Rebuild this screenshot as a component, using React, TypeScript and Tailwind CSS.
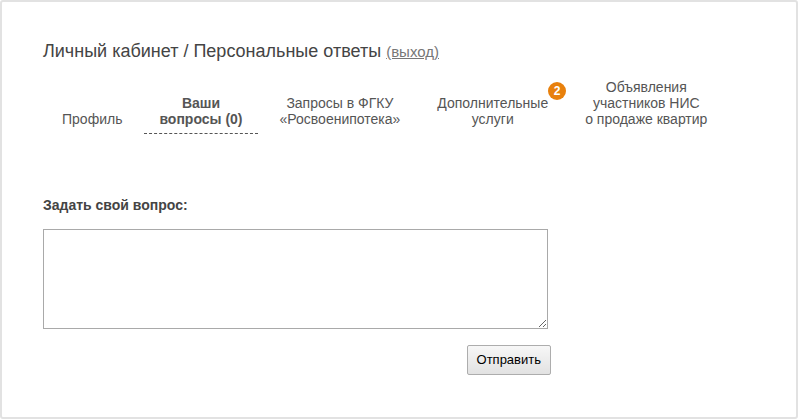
export default function App() {
  const tabs = [
    { label: ['Профиль'], active: false },
    { label: ['Ваши', 'вопросы (0)'], active: true },
    { label: ['Запросы в ФГКУ', '«Росвоенипотека»'], active: false },
    { label: ['Дополнительные', 'услуги'], active: false, badge: 2 },
    { label: ['Объявления', 'участников НИС', 'о продаже квартир'], active: false },
  ];

  return (
    <div
      className="w-[798px] h-[419px] border-2 border-[#e2e2e2] rounded-[3px] bg-white pl-[41px] pt-[38px]"
      style={{ fontFamily: '"Liberation Sans", Arial, sans-serif' }}
    >
      <h1 className="text-[18px] leading-[22px] text-[#444]">
        Личный кабинет / Персональные ответы{' '}
        <a href="#" className="text-[15px] text-[#777] underline">
          (выход)
        </a>
      </h1>

      <div className="flex items-end gap-[7px] mt-[16px] ml-[4px]">
        {tabs.map((t, i) => (
          <div
            key={i}
            className={
              'relative px-[15px] pb-[6px] border-b text-center text-[14px] leading-[16px] text-[#555] ' +
              (t.active ? 'font-bold border-dashed border-[#555]' : 'border-transparent')
            }
          >
            {t.label.map((l, j) => (
              <div key={j} className="whitespace-nowrap">
                {l}
              </div>
            ))}
            {t.badge && (
              <span className="absolute right-[-3px] top-[-13px] w-[18px] h-[18px] rounded-full bg-[#e8800c] text-white text-[12px] font-bold leading-[18px] text-center">
                {t.badge}
              </span>
            )}
          </div>
        ))}
      </div>

      <div className="mt-[63px] w-[508px]">
        <div className="text-[14px] leading-[16px] font-bold text-[#444]">Задать свой вопрос:</div>
        <textarea className="block mt-[16px] w-[505px] h-[100px] border border-[#a9a9a9] bg-white outline-none resize" />
        <div className="flex justify-end mt-[16px]">
          <button className="h-[30px] px-[9px] text-[13px] text-black border border-[#adadad] rounded-[2px] bg-gradient-to-b from-[#f7f7f7] to-[#e2e2e2]">
            Отправить
          </button>
        </div>
      </div>
    </div>
  );
}
